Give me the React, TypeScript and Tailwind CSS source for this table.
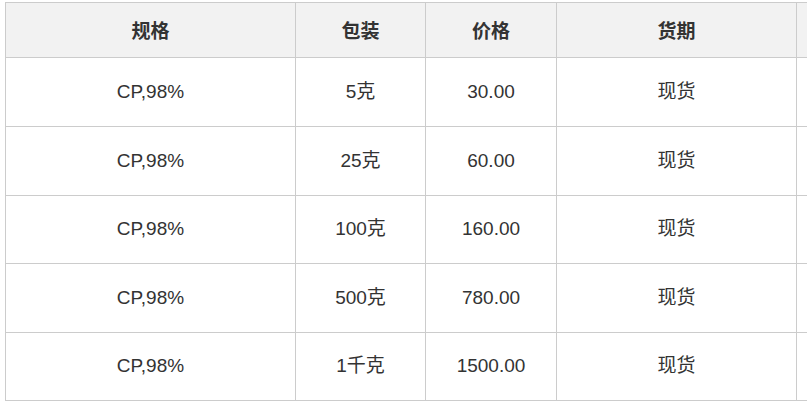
const rows = [
  { spec: "CP,98%", pack: "5克", price: "30.00", lead: "现货" },
  { spec: "CP,98%", pack: "25克", price: "60.00", lead: "现货" },
  { spec: "CP,98%", pack: "100克", price: "160.00", lead: "现货" },
  { spec: "CP,98%", pack: "500克", price: "780.00", lead: "现货" },
  { spec: "CP,98%", pack: "1千克", price: "1500.00", lead: "现货" },
];

const heights = ["h-[69px]", "h-[69px]", "h-[68px]", "h-[69px]", "h-[68px]"];

export default function App() {
  return (
    <div
      className="w-[807px] h-[417px] overflow-hidden bg-white pt-[2px] pl-[5px] text-[#333] text-[19px]"
      style={{ fontFamily: '"Liberation Sans", Arial, "Noto Sans CJK SC", sans-serif' }}
    >
      <table className="table-fixed border-collapse w-[900px]">
        <colgroup>
          <col className="w-[290px]" />
          <col className="w-[130px]" />
          <col className="w-[131px]" />
          <col className="w-[240px]" />
          <col />
        </colgroup>
        <thead>
          <tr className="h-[55px] bg-[#f2f2f2]">
            <th className="border border-[#cccccc] font-bold pt-[4px]">规格</th>
            <th className="border border-[#cccccc] font-bold pt-[4px]">包装</th>
            <th className="border border-[#cccccc] font-bold pt-[4px]">价格</th>
            <th className="border border-[#cccccc] font-bold pt-[4px]">货期</th>
            <th className="border border-[#cccccc]"></th>
          </tr>
        </thead>
        <tbody>
          {rows.map((r, i) => (
            <tr key={i} className={heights[i]}>
              <td className="border border-[#cccccc] text-center">{r.spec}</td>
              <td className="border border-[#cccccc] text-center">{r.pack}</td>
              <td className="border border-[#cccccc] text-center">{r.price}</td>
              <td className="border border-[#cccccc] text-center">{r.lead}</td>
              <td className="border border-[#cccccc]"></td>
            </tr>
          ))}
        </tbody>
      </table>
    </div>
  );
}
